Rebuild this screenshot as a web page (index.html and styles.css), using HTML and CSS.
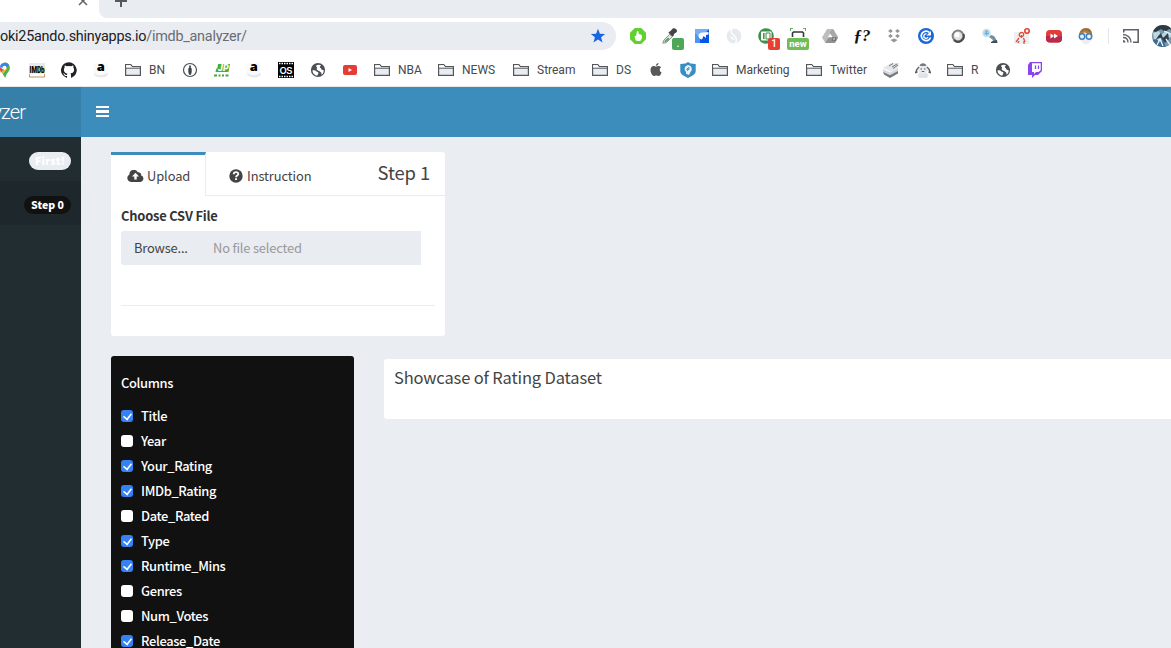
FILE: index.html
```
<!DOCTYPE html>
<html lang="en">
<head>
<meta charset="utf-8">
<title>IMDb Analyzer</title>
<link rel="stylesheet" href="styles.css">
</head>
<body>
<svg class="defs" width="0" height="0">
  <symbol id="folder" viewBox="0 0 16 16"><path d="M.6 13.4V2.7h5.2l1.6 2h8v8.7z" fill="#e9ecf1" stroke="#54575b" stroke-width="1.2"/><path d="M1.2 3.3h4.3l1.5 1.9h7.8V6H1.2z" fill="#fff"/><path d="M1 6.2h14.4" stroke="#54575b" stroke-width="1"/></symbol>
  <symbol id="globe" viewBox="0 0 16 16"><circle cx="8" cy="8" r="7.1" fill="#4b4f54"/><path d="M2.5 8.2c1.6-.2 3 .1 3.7 1 .8 1 2.5.5 2.2 2.2-.1.9-1.2 1.2-1 2.3-2.7-.4-5-2.6-4.9-5.500zM6 3.700c1.500-1.200 3.600-1.300 5-.5-.2 1-1.500 1-1.200 2 .4 1 1.500.4 1.400 1.800-.1 1.200 1.600.7 2.500 1.300.2 1.900-.7 3.500-2.200 4.500.3-1.800-.5-2.500-1.300-3.100C9 8.600 7.600 8.800 6.800 7.500 6.200 6.500 7.500 6 7 5.200c-.3-.500-1-.6-1-1.500z" fill="#fff"/></symbol>
  <symbol id="amazon" viewBox="0 0 16 16"><rect x=".5" y="1" width="14" height="14" rx="2" fill="#fafafa"/><path d="M1 11c4 3 9 3 13 0l1 1c-1 4-11 5-14 0z" fill="#e5e8ed"/><text x="3.700" y="9.300" font-family="Open Sans, sans-serif" font-size="13" font-weight="800" fill="#000">a</text></symbol>
</svg>

<div class="tabstrip">
  <div class="tab"><svg width="10" height="10" viewBox="0 0 10 10"><path d="M1 1l8 8M9 1L1 9" stroke="#5f6368" stroke-width="1.500"/></svg></div>
  <div class="newtab"><svg width="14" height="14" viewBox="0 0 14 14"><path d="M7 1v12M1 7h12" stroke="#55585c" stroke-width="2"/></svg></div>
</div>

<div class="toolbar">
  <div class="omnibox">
    <span class="url">oki25ando.shinyapps.io<span class="path">/imdb_analyzer/</span></span>
    <svg width="16" height="16" viewBox="0 0 16 16"><path d="M8 .8l1.900 4.900 5.300.3-4.100 3.300 1.400 5.200L8 11.600l-4.500 2.900 1.400-5.200L.8 6l5.300-.3z" fill="#1a66e0"/></svg>
  </div>
  <div class="extensions">
    <div class="ext"><svg viewBox="0 0 16 16"><path d="M4.800 0h6.400L16 4.800v6.400L11.200 16H4.800L0 11.200V4.800z" fill="#60d12f"/><path d="M4.500 8.200l1.600-.5 1-4.700c1.500-.3 1.700.9 1.500 3l2.800.7c1 1.300.6 4.300-.6 5.700-2 1-4.300.8-5.300-.5z" fill="#fff"/></svg></div>
    <div class="ext"><svg viewBox="0 0 16 16"><path d="M.8 15.200l1-3 6-6 2.500 2.500-6 6z" fill="#dfeee0" stroke="#777" stroke-width=".8"/><path d="M2 13.500l4-4 1.500 1.500-3.500 3z" fill="#49a84c"/><path d="M7 4l1.500-1 2-2.300c2-1.500 5.300.8 4.300 3.200L12 6l-.5 2-1.200.5-4-4z" fill="#454545"/></svg><b class="badge green">.</b></div>
    <div class="ext"><svg viewBox="0 0 16 16"><path d="M1 1h14L1 15z" fill="#77aef5"/><path d="M15 1v14H1z" fill="#0757e6"/><path d="M1 15V5l5 5v5z" fill="#4b95f6"/><path d="M14.500 4v2.500L12 7v3L9.500 8 8 11.500C5.500 11 4.300 9 4.500 7.200 5 5 7 4.300 9 4.500z" fill="#fff"/></svg></div>
    <div class="ext"><svg viewBox="0 0 16 16"><circle cx="8" cy="8" r="7.400" fill="#e6e9ee"/><path d="M6.500 0C3.500 4 6 5.500 8 7.500s4 4.500 1 8.500M5 8.500c.5 2 2 2.500 3 3" fill="none" stroke="#fff" stroke-width="1.300"/></svg></div>
    <div class="ext"><svg viewBox="0 0 16 16"><circle cx="8" cy="8" r="7.800" fill="#3c9148"/><rect x="3" y="3.500" width="10.500" height="9" rx="1" fill="#fff"/><path d="M5.800 5v6" stroke="#3c9148" stroke-width="1.500"/><path d="M8 5h4v6H8z" fill="#fff" stroke="#3c9148" stroke-width="1"/></svg><b class="badge red">1</b></div>
    <div class="ext"><svg viewBox="0 0 16 16"><path d="M0 3V0h3M13 0h3v3" fill="none" stroke="#4a9b43" stroke-width="1.600"/><path d="M2.500 9V5l1-1h9l1 1v4" fill="none" stroke="#34383c" stroke-width="1.600"/></svg><b class="badge new">new</b></div>
    <div class="ext"><svg viewBox="0 0 16 16"><path d="M5 1h6L5 13l-2 1.500L0 9.500z" fill="#bdbdbd"/><path d="M11 1l5 9-3 5H3l4-6h4L8 4.500z" fill="#929292"/><path d="M11 1L8 6l3 3h5z" fill="#a9a9a9"/><path d="M8 5.700l2 3.500H6z" fill="#fff"/><rect x="10" y="9" width="4" height="4" fill="#777"/><path d="M12 9.500v2.500" stroke="#ddd"/></svg></div>
    <div class="ext"><span class="fq">ƒ?</span></div>
    <div class="ext"><svg viewBox="0 0 16 16"><path d="M4.500 1l2.400 2-2.400 2-2.400-2zM11.500 1l2.400 2-2.400 2L9.100 3zM4.500 6l2.400 2-2.400 2-2.400-2zM11.500 6l2.400 2-2.400 2-2.400-2zM4.500 12L8 10.500l3.500 1.500L8 14.500z" fill="#949698"/></svg></div>
    <div class="ext"><svg viewBox="0 0 16 16"><circle cx="8" cy="8" r="8" fill="#1967d8"/><path d="M11.500 4.500A4.800 4.800 0 1 0 12.600 9.500" fill="none" stroke="#fff" stroke-width="1.700"/><path d="M10 9A2.200 2.200 0 1 1 8.500 6" fill="none" stroke="#fff" stroke-width="1.300"/><path d="M13 3v4.500H8.500z" fill="#fff"/></svg></div>
    <div class="ext"><svg viewBox="0 0 16 16"><circle cx="8" cy="8" r="5.400" fill="#e1e2e3" stroke="#808284" stroke-width="2"/><path d="M4 12a5.700 5.700 0 0 0 9.400-6" stroke="#494b4e" stroke-width="2" fill="none"/><circle cx="7" cy="6.700" r="2.500" fill="#fff"/></svg></div>
    <div class="ext"><svg viewBox="0 0 16 16"><circle cx="4.500" cy="5" r="3.500" fill="#a6d1e5" stroke="#c7e0eb" stroke-width="1.500"/><path d="M3.500 3h2M4.500 3v4M3 5.500h3.500" stroke="#65abcb"/><path d="M7 9l2-2 3 1 2 3 1 4h-5l1-3z" fill="#6f92a0"/><path d="M9 14l2-1 4-1 .5 3H9z" fill="#444d54"/></svg></div>
    <div class="ext"><svg viewBox="0 0 16 16"><rect x="0" y="4" width="15" height="12" rx="1" fill="#edf0f3"/><circle cx="13" cy="3" r="2.200" fill="#fff" stroke="#e6402e" stroke-width="1.600"/><path d="M5.500 8c-1.500-4 5-5 4-1 0 2-3 2-4 1zM7.500 7v3M5 10l-3 4M9.500 10l1.500 4M5 13l-1 2M10 13v3" stroke="#dc503c" stroke-width="1.300" fill="none"/></svg></div>
    <div class="ext"><svg viewBox="0 0 16 16"><rect x="0" y="2" width="16" height="12.500" rx="4" fill="#e23b38"/><path d="M0 8h16v2.500a4 4 0 0 1-4 4H4a4 4 0 0 1-4-4z" fill="#b92b4c"/><path d="M4.500 5.500L8 8l-3.500 2.500zM8 5.500L12 8l-4 2.500z" fill="#fff"/></svg></div>
    <div class="ext"><svg viewBox="0 0 16 16"><path d="M1 8c0-5 3-8 7-8s7 3 6 10z" fill="#986d38"/><path d="M2 8h12v4l-4 4H6l-4-4z" fill="#eceef3"/><path d="M3 6.500l3-3 3 2 4 1v3H3z" fill="#f1ddcb"/><path d="M2 6l5-3 6 3" stroke="#b88243" stroke-width="1.800" fill="none"/><circle cx="4" cy="8.500" r="2.700" fill="#eaf3fc" stroke="#3f80c0" stroke-width="1.500"/><circle cx="11" cy="8.500" r="2.700" fill="#eaf3fc" stroke="#3f80c0" stroke-width="1.500"/></svg></div>
  </div>
  <div class="divider"></div>
  <svg class="cast" width="16" height="14" viewBox="0 0 16 14"><path d="M.8 3.500V.8h14.400v12.400H10" fill="none" stroke="#606368" stroke-width="1.600"/><path d="M0 5.500c4.500 0 8 3.500 8 8M0 8.500c3 0 5 2 5 5" fill="none" stroke="#606368" stroke-width="1.400"/><path d="M0 11c1.500 0 2.500 1 2.500 2.500H0z" fill="#606368"/></svg>
  <svg class="avatar" width="22" height="22" viewBox="0 0 22 22"><defs><clipPath id="round"><circle cx="11" cy="11" r="11"/></clipPath></defs><g clip-path="url(#round)"><path d="M0 0h22v22H0z" fill="#7b98a8"/><path d="M0 0h22v6l-5-2-4 3-4-3-5 3-4-1z" fill="#2c3a44"/><path d="M1 8l6-2 2 4 5-4 4 3 4-1v5l-4-1-3 3-4-3-4 4-5-2z" fill="#bcd7e2"/><path d="M9 8l2 5 5-5 1 6-4 4-4-5-5 1 3-4z" fill="#2c4252"/><path d="M0 15l5-1 2 4 4-3 3 7H0z" fill="#3b6a97"/><path d="M5 20l3-6 3 7M14 14l5 7M12 6l7 3" stroke="#edf3f4" stroke-width="1.300" fill="none"/></g></svg>
</div>

<div class="bookmarks">
  <svg class="ic" viewBox="0 0 16 16"><path d="M7.500 .3a5.400 5.400 0 0 1 5.400 5.400C12.900 9.500 9 11 8.500 15.800 7 14.500 5.500 12 5 10z" fill="#4caf50"/><path d="M2.800 5L3.500 3A5 5 0 0 1 12 3L8 7z" fill="#3b82ed"/><path d="M2 4l4 3.500L4 11z" fill="#e34133"/><path d="M5 10l4-4.500 1 1.500-4 5z" fill="#f8bd14"/><circle cx="7.500" cy="5.700" r="2" fill="#fff"/></svg>
  <svg class="ic" viewBox="0 0 16 16"><path d="M0 1h16v4H0z" fill="#e8eaed"/><path d="M0 4.500h16v7H0z" fill="#efdc9c"/><text x=".5" y="11.300" textLength="15" lengthAdjust="spacingAndGlyphs" font-family="Roboto, sans-serif" font-weight="900" font-size="8.500">IMDb</text><path d="M.4 12v3h15.200v-3" fill="#fff" stroke="#a6783c" stroke-width=".8"/></svg>
  <svg class="ic" viewBox="0 0 16 16"><path d="M8 .200a8 8 0 0 0-2.500 15.600c.4.100.5-.2.500-.4v-1.500c-2.200.5-2.700-1-2.700-1-.4-.9-.9-1.200-.9-1.200-.7-.5.100-.5.100-.5.800.1 1.200.8 1.200.8.700 1.300 1.900.9 2.300.7.100-.5.300-.9.500-1.100-1.800-.2-3.600-.9-3.600-4 0-.8.300-1.600.8-2.100-.1-.2-.4-1 .1-2.100 0 0 .7-.2 2.200.8a7.500 7.500 0 0 1 4 0c1.500-1 2.200-.8 2.200-.8.400 1.100.2 1.900.1 2.100.5.600.8 1.300.8 2.100 0 3.100-1.900 3.700-3.700 3.900.3.300.6.800.6 1.500v2.300c0 .2.100.5.500.4A8 8 0 0 0 8 .2z" fill="#1f2328"/></svg>
  <svg class="ic"><use href="#amazon"/></svg>
  <span class="bm"><svg class="ic"><use href="#folder"/></svg><span class="w17">BN</span></span>
  <svg class="ic" viewBox="0 0 16 16"><circle cx="8" cy="8" r="6.500" fill="#fff" stroke="#4c4f53" stroke-width="1.200"/><path d="M8 3l1 1.300-.3 1.200 1 1V10L9 12.800H7L6.300 10V6.500l1-1L7 4.300z" fill="#3f4347"/></svg>
  <svg class="ic" viewBox="0 0 16 16"><path d="M4 2h12l-1.500 8H1.500l.8-3.500h1z" fill="#4aae37"/><text x="4" y="9.300" font-family="Roboto, sans-serif" font-size="9" font-weight="900" font-style="italic" fill="#fff">JP</text><path d="M0 12.500h3v2H0zM4.500 12.500h2v2h-2zM8 12.500h2v2H8zM11.500 12.500h3v2h-3z" fill="#49a63a"/></svg>
  <svg class="ic"><use href="#amazon"/></svg>
  <svg class="ic" viewBox="0 0 16 16"><rect width="16" height="16" fill="#000"/><path d="M1 1.500h14M1 14.500h14" stroke="#fff" stroke-width="1.500" stroke-dasharray="1.500 1"/><text x="1.500" y="11.500" textLength="13" font-family="Inter, sans-serif" font-size="9.500" font-weight="600" fill="#fff">OS</text></svg>
  <svg class="ic"><use href="#globe"/></svg>
  <svg class="ic" viewBox="0 0 16 16"><rect x="1" y="3" width="14" height="10" rx="2" fill="#e73b35"/><path d="M6.500 6v4L10 8z" fill="#fff"/></svg>
  <span class="bm"><svg class="ic"><use href="#folder"/></svg><span class="w24">NBA</span></span>
  <span class="bm"><svg class="ic"><use href="#folder"/></svg><span class="w35">NEWS</span></span>
  <span class="bm"><svg class="ic"><use href="#folder"/></svg><span class="w39">Stream</span></span>
  <span class="bm"><svg class="ic"><use href="#folder"/></svg><span class="w16">DS</span></span>
  <svg class="ic" viewBox="0 0 16 16"><path d="M10.500 1c.1 1.500-1.200 2.900-2.600 2.800C7.700 2.400 9.100 1.100 10.500 1zM8 4.600c.7 0 1.500-.7 2.700-.7 1.200.1 2 .6 2.500 1.300-2.200 1.400-1.800 4.300.4 5.200-.6 1.700-1.700 3.700-3 3.700-.9 0-1.200-.6-2.300-.6s-1.400.6-2.300.6c-1.700 0-3.500-3.400-3.500-6C2.500 5.200 4 4 5.500 4c1 0 1.800.6 2.500.6z" fill="#585858"/></svg>
  <svg class="ic" viewBox="0 0 16 16"><path d="M8 0l2.500 1.500L15.700 2v7c0 3.500-3.700 5-7.700 7-4-2-7.700-3.500-7.700-7V2l5.200-.5z" fill="#388ec2"/><path d="M8 3a4 4 0 0 1 2.500 7L9 13 6 11.800V10A4 4 0 0 1 8 3z" fill="#e9f4fa"/><path d="M7 8.500V6.800L9 5.500v1.700z" stroke="#388ec2" stroke-width="1" fill="none"/></svg>
  <span class="bm"><svg class="ic"><use href="#folder"/></svg><span class="w54">Marketing</span></span>
  <span class="bm"><svg class="ic"><use href="#folder"/></svg><span class="w37">Twitter</span></span>
  <svg class="ic" viewBox="0 0 16 16"><path d="M0 6l8-5h8l-1 5-7 3.500z" fill="#e3e6ea"/><path d="M6 4l4-2.500M9 5l5-3M10 6.500l5-3.500" stroke="#73767b" stroke-width="1"/><path d="M0 7l7 3.500L15 6v3l-8 5-7-4z" fill="#d6d9df"/><path d="M0 10l7 3.300L15 9v2.500L7 16l-6-3.500z" fill="#77797d"/></svg>
  <svg class="ic" viewBox="0 0 16 16"><path d="M2.500 14L4 11h8l1.500 3-2 2h-7z" fill="#e0e3e8"/><circle cx="8" cy="7" r="5" fill="#e8ebef"/><path d="M4.500 3.500C6 .5 10 .5 11.500 3.500L10 4H6z" fill="#77797e"/><path d="M4 5C2.500 6 1.500 8 .7 10.500l1.800-.5M12 5c1.500 1 2.500 3 3.300 5.500l-1.800-.5" fill="none" stroke="#5b5f65" stroke-width="1.500"/><path d="M5.500 7H7M9 7h1.500M6.800 9.500h2.400" stroke="#5b5f65" stroke-width="1.200"/></svg>
  <span class="bm"><svg class="ic"><use href="#folder"/></svg><span class="w8">R</span></span>
  <svg class="ic"><use href="#globe"/></svg>
  <svg class="ic" viewBox="0 0 16 16"><path d="M3 0h12v9l-4 4H8l-3 3v-3H1V3z" fill="#8b45ed"/><path d="M5 1.300h8.700v7L11.500 10H9l-2 2v-2H5z" fill="#fff"/><path d="M8.500 3.500v3.500M11.500 3.500v3.500" stroke="#8b45ed" stroke-width="1.300"/></svg>
</div>

<header class="header">
  <div class="logo">yzer</div>
  <div class="toggle"><i></i><i></i><i></i></div>
</header>

<div class="shell">
  <aside class="sidebar">
    <div class="item"><span class="pill light">First!</span></div>
    <div class="item active"><span class="pill dark">Step 0</span></div>
  </aside>
  <main class="content">
    <section class="upload-box">
      <div class="tabs">
        <div class="tab-active"><svg width="17" height="12" viewBox="0 0 17 12"><path d="M4 12a4 4 0 0 1-1.600-7.500A4.500 4.500 0 0 1 10.800 2.200 3 3 0 0 1 14.200 5.600 3.300 3.300 0 0 1 13.500 12z" fill="#444"/><path d="M8.500 2.800l3.500 3.700H9.700v3H7.300v-3H5z" fill="#fff"/></svg><span>Upload</span></div>
        <div class="tab-other"><svg width="14" height="14" viewBox="0 0 14 14"><circle cx="7" cy="7" r="6.700" fill="#444"/><path d="M4.700 5.200C4.700 2.400 9.300 2.500 9.300 5c0 1.700-2.200 1.500-2.200 3.200" fill="none" stroke="#fff" stroke-width="1.800"/><path d="M6.100 9.300H8v1.700H6.100z" fill="#fff"/></svg><span>Instruction</span></div>
        <div class="step">Step 1</div>
      </div>
      <div class="upload-body">
        <div class="choose">Choose CSV File</div>
        <div class="file"><span class="browse">Browse...</span><span class="nofile">No file selected</span></div>
        <div class="rule"></div>
      </div>
    </section>
    <div class="row">
      <section class="columns">
        <div class="columns-title">Columns</div>
        <div class="check"><i class="on"></i><span>Title</span></div>
        <div class="check"><i></i><span>Year</span></div>
        <div class="check"><i class="on"></i><span>Your_Rating</span></div>
        <div class="check"><i class="on"></i><span>IMDb_Rating</span></div>
        <div class="check"><i></i><span>Date_Rated</span></div>
        <div class="check"><i class="on"></i><span>Type</span></div>
        <div class="check"><i class="on"></i><span>Runtime_Mins</span></div>
        <div class="check"><i></i><span>Genres</span></div>
        <div class="check"><i></i><span>Num_Votes</span></div>
        <div class="check"><i class="on"></i><span>Release_Date</span></div>
      </section>
      <section class="showcase">Showcase of Rating Dataset</section>
    </div>
  </main>
</div>
</body>
</html>
```
FILE: styles.css
```
* { box-sizing: border-box; }
html, body { margin: 0; height: 648px; overflow: hidden; }
body { width: 1171px; display: flex; flex-direction: column; background: #fff; font-family: "Noto Sans CJK SC", "Noto Sans", sans-serif; font-size: 12.9px; letter-spacing: -.1px; color: #444; }
.defs { position: absolute; }
svg { display: block; flex: none; }

.tabstrip { display: flex; height: 18px; flex: none; background: #fff; }
.tab { width: 99px; padding: 0 11px 0 0; display: flex; justify-content: flex-end; }
.tab svg { margin-top: -4px; }
.newtab { flex: 1; background: #e9ecf1; border-bottom-left-radius: 8px; padding-left: 15px; }
.newtab svg { margin-top: -6px; }

.toolbar { display: flex; align-items: center; height: 36px; flex: none; letter-spacing: 0; }
.omnibox { width: 616px; flex: none; height: 28px; background: #e9ecf1; border-radius: 0 14px 14px 0; display: flex; align-items: center; justify-content: space-between; padding-right: 10px; }
.url { font-family: Roboto, sans-serif; font-size: 14.4px; line-height: 20px; letter-spacing: -.24px; margin-top: 2px; color: #202124; white-space: nowrap; }
.path { color: #6a6d71; }
.extensions { display: flex; flex: none; margin-left: 6px; }
.ext { position: relative; width: 32px; height: 28px; display: flex; align-items: center; justify-content: center; }
.ext svg { width: 16px; height: 16px; }
.badge { position: absolute; left: 18px; top: 16px; width: 12px; height: 12px; border-radius: 2px; color: #fff; font: 500 10px/12px Roboto, sans-serif; text-align: center; }
.green { background: #4da758; }
.red { background: #e83e34; }
.badge.new { left: 5px; width: 22px; background: #70bd55; font-weight: 700; font-size: 9.500px; }
.fq { font: italic bold 17px/20px "Liberation Serif", serif; color: #111; }
.divider { width: 1px; flex: none; height: 16px; background: #e4e7eb; margin: 0 14px 0 6px; }
.avatar { margin-left: 13px; }

.bookmarks { display: flex; align-items: center; gap: 16px; height: 33px; flex: none; margin-left: -3px; border-bottom: 1px solid #e3e6ea; font: 12px/16px Roboto, sans-serif; letter-spacing: 0; color: #46494d; }
.ic { width: 16px; height: 16px; }
.bm { display: flex; align-items: center; gap: 8px; white-space: nowrap; }
.bm span { display: block; }
.w17 { width: 17px; }
.w24 { width: 24px; }
.w35 { width: 35px; }
.w39 { width: 39px; }
.w16 { width: 16px; }
.w54 { width: 54px; }
.w37 { width: 37px; }
.w8 { width: 8px; }

.header { display: flex; height: 50px; flex: none; background: #3c8dbc; }
.logo { width: 81px; padding-right: 56px; background: #367fa9; color: #fff; font: 300 20px/51px Roboto, sans-serif; letter-spacing: -.9px; display: flex; justify-content: flex-end; overflow: hidden; }
.toggle { display: flex; flex-direction: column; gap: 2px; padding: 19px 15px; }
.toggle i { width: 13px; height: 2.400px; background: #fff; }

.shell { display: flex; flex: 1; min-height: 0; }
.sidebar { width: 81px; background: #222d32; }
.item { height: 44px; display: flex; justify-content: flex-end; padding: 15px 10px 0 0; }
.item.active { background: #1e282c; }
.pill { height: 18px; border-radius: 9px; color: #fff; font-weight: 900; font-size: 10.500px; line-height: 17px; letter-spacing: 0; text-align: center; }
.light { width: 42px; background: #e9edf2; letter-spacing: .3px; }
.dark { width: 47px; background: #111; }

.content { flex: 1; min-width: 0; background: #eaedf2; padding: 15px 0 0 30px; overflow: hidden; }
.upload-box { width: 334px; height: 184px; background: #fff; border-radius: 3px; }
.tabs { display: flex; height: 44px; line-height: 20px; }
.tab-active { display: flex; width: 95px; border-top: 3px solid #3c8dbc; border-right: 1px solid #e9ecf1; padding: 11px 0 0 16px; }
.tab-active svg { margin: 4px 3px 0 0; }
.tab-other { display: flex; width: 146px; padding: 14px 0 0 23px; border-bottom: 1px solid #e9ecf1; }
.tab-other svg { margin: 3px 4px 0 0; }
.step { flex: 1; border-bottom: 1px solid #e9ecf1; font-size: 18.4px; line-height: 40px; text-align: right; padding-right: 15px; white-space: nowrap; }
.upload-body { padding: 10px; }
.choose { font-weight: 700; color: #333; line-height: 20px; height: 20px; letter-spacing: -.2px; }
.file { display: flex; width: 300px; height: 34px; margin-top: 5px; background: #e9ecf1; border-radius: 3px 0 0 3px; line-height: 34px; letter-spacing: -.18px; white-space: nowrap; }
.browse { width: 92px; padding-left: 13px; }
.nofile { color: #999; }
.rule { height: 1px; background: #e9ecf1; margin-top: 40px; }
.row { display: flex; gap: 30px; margin-top: 20px; }
.columns { width: 243px; height: 300px; flex: none; background: #111; color: #fff; border-radius: 3px; padding: 17px 10px; font-weight: 500; letter-spacing: -.35px; }
.columns-title { line-height: 20px; margin-bottom: 10px; }
.check { display: flex; align-items: center; gap: 8px; height: 25px; }
.check i { width: 12px; height: 12px; border-radius: 3px; background: #fff; display: flex; justify-content: center; }
.check .on { background: #3482f6; }
.check .on::after { content: ""; width: 5px; height: 8px; margin-top: 1px; border: solid #fff; border-width: 0 2px 2px 0; transform: translateY(-.3px) rotate(38deg) scale(.78); }
.showcase { flex: 1; height: 60px; margin-top: 3px; background: #fff; border-radius: 3px 0 0 3px; padding: 7px 10px; font-size: 16.500px; line-height: 22px; letter-spacing: -.15px; }
```
